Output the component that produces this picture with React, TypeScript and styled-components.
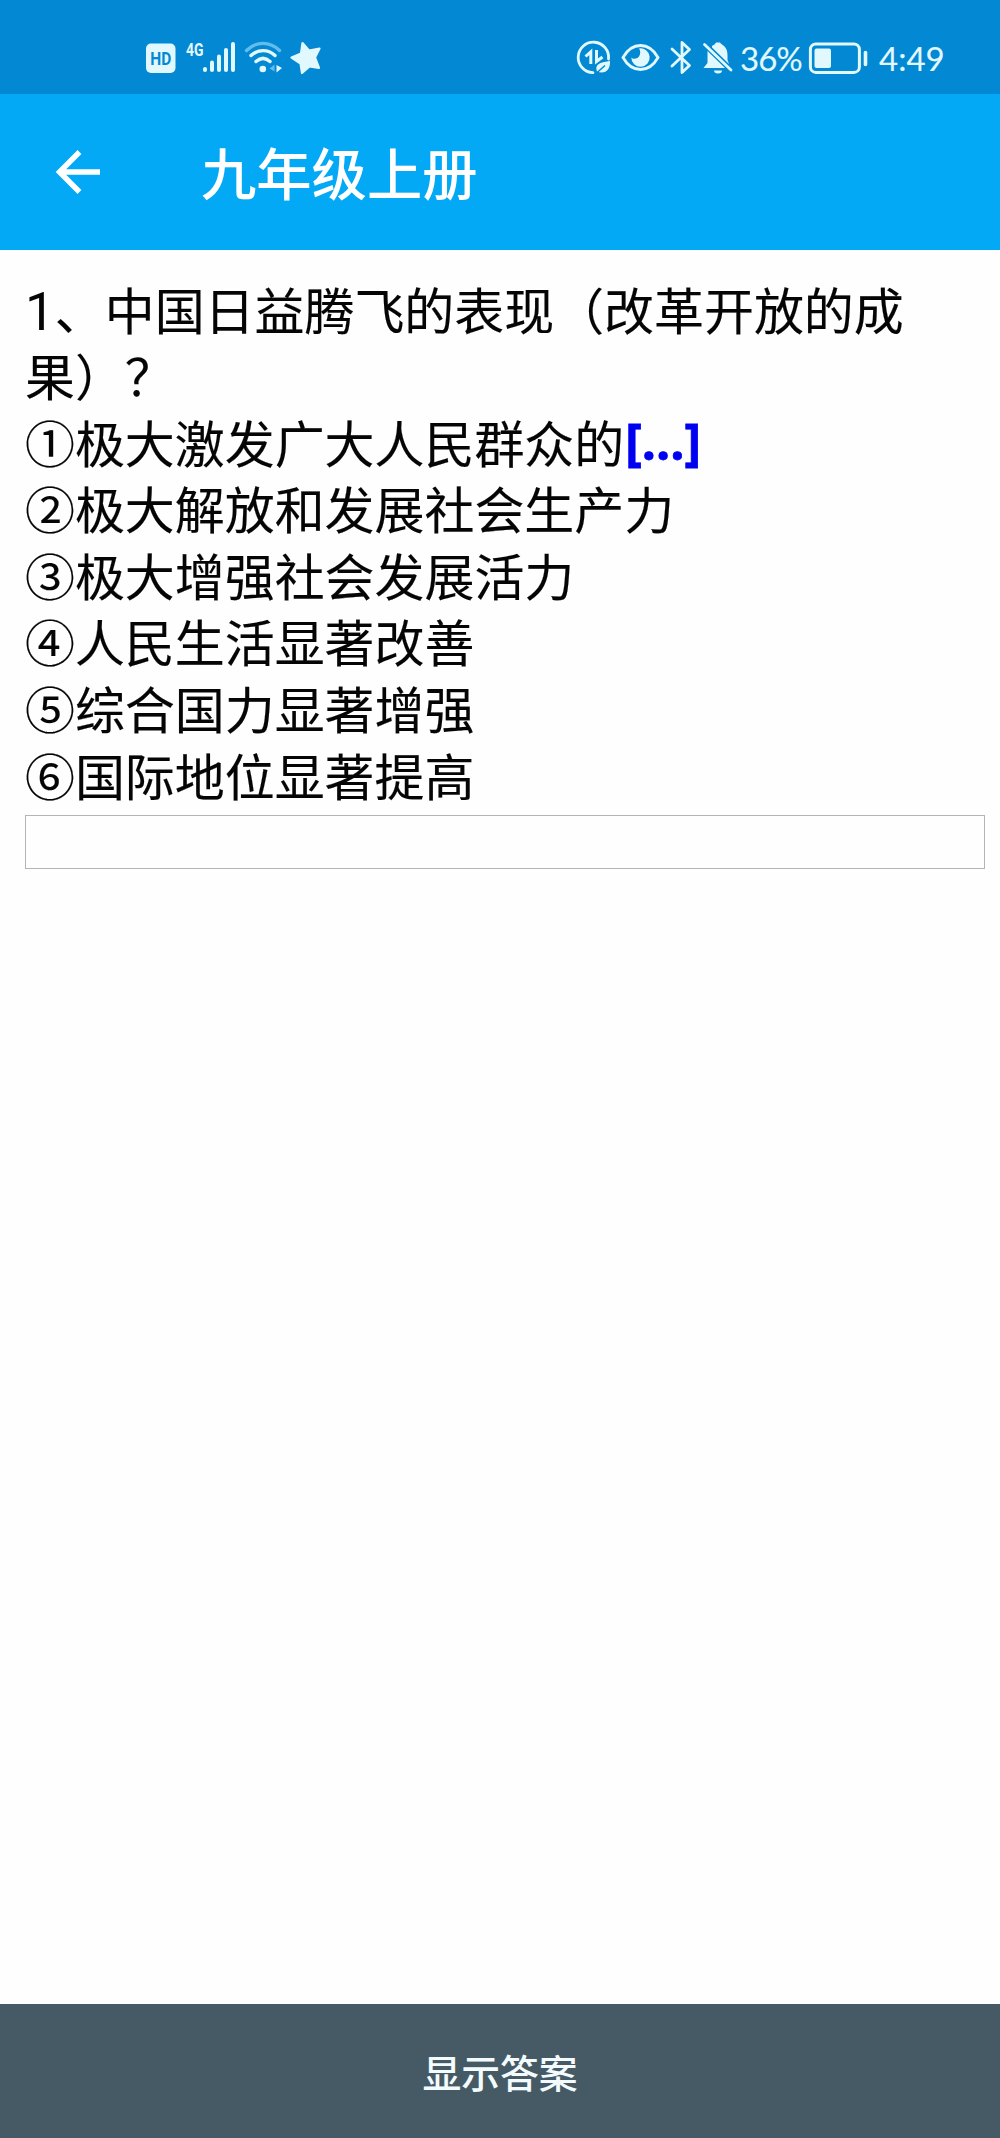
import React from 'react';
import styled, { createGlobalStyle } from 'styled-components';

const GlobalStyle = createGlobalStyle`
  body { margin: 0; background: #fefefe; }
  * { box-sizing: border-box; }
`;

const cjk = `"Noto Sans CJK SC", sans-serif`;
const ink = '#e2f8ff';

const Screen = styled.div`
  display: flex;
  flex-direction: column;
  width: 1000px;
  height: 2138px;
  background: #fefefe;
  font-family: ${cjk};
`;

const StatusBar = styled.div`
  display: flex;
  justify-content: space-between;
  height: 94px;
  padding: 38px 56px 0 146px;
  background: #0388d3;
  color: ${ink};
`;

const StatusGroup = styled.div`
  display: flex;
  align-items: flex-start;
  height: 40px;
`;

const Glyph = styled.svg<{ $gap?: number }>`
  display: block;
  flex: none;
  height: 40px;
  margin-left: ${(p) => p.$gap ?? 0}px;
  overflow: visible;
`;

const StatusText = styled.span<{ $width: number; $gap: number; $spacing?: number }>`
  flex: none;
  width: ${(p) => p.$width}px;
  margin-left: ${(p) => p.$gap}px;
  font: 400 33px/41px Lato, sans-serif;
  letter-spacing: ${(p) => p.$spacing ?? 0}px;
  white-space: nowrap;
  -webkit-text-stroke: 0.1px ${ink};
`;

const AppBar = styled.header`
  display: flex;
  align-items: center;
  height: 156px;
  padding-left: 55px;
  background: #03a9f4;
  color: #fff;
`;

const BackButton = styled.button`
  display: flex;
  align-items: center;
  width: 46px;
  height: 46px;
  padding: 0;
  border: 0;
  background: none;
  color: inherit;
`;

const Title = styled.h1`
  margin: 0 0 3px 100px;
  font: 500 55.3px/80px ${cjk};
`;

const Content = styled.main`
  flex: 1;
  padding: 24.5px 15px 0 25px;
`;

const Line = styled.p`
  margin: 0;
  font-size: 49.95px;
  line-height: 66.6px;
  color: #050505;
  -webkit-text-stroke: 0.15px #050505;
`;

const Numeral = styled.span`
  font: 400 53px/0 Roboto, sans-serif;
  -webkit-text-stroke: 0;
`;

const Cloze = styled.span`
  position: relative;
  top: -2.5px;
  margin-left: 1px;
  font: 700 50px/0 "Open Sans", sans-serif;
  color: #0000f0;
  -webkit-text-stroke: 0.8px #0000f0;
`;

const AnswerInput = styled.input`
  display: block;
  width: 960px;
  height: 54px;
  margin: 7.5px 0 0;
  padding: 0 8px;
  border: 1px solid #b4b4b4;
  background: #fefefe;
  font: 36px ${cjk};
`;

const ShowAnswer = styled.button`
  height: 134px;
  padding: 0 0 1px;
  border: 0;
  background: #455a64;
  color: #f4fbff;
  font: 500 38.8px/60px ${cjk};
`;

const LeftStatus = () => (
  <StatusGroup>
    <Glyph width="30" viewBox="0 0 30 40">
      <rect x="0" y="5.5" width="29.5" height="29.5" rx="5" fill={ink} />
      <text x="14.8" y="26.5" textAnchor="middle" textLength="21" lengthAdjust="spacingAndGlyphs"
        fontFamily="Roboto" fontWeight="700" fontSize="18" fill="#0388d3">HD</text>
    </Glyph>
    <Glyph width="50" viewBox="0 0 50 40" $gap={10} fill={ink}>
      <text x="0" y="17.5" textLength="17.5" lengthAdjust="spacingAndGlyphs"
        fontFamily="Roboto" fontWeight="700" fontSize="19">4G</text>
      <rect x="17" y="29" width="4" height="5" rx="2" />
      <rect x="24" y="22.5" width="4" height="11.5" rx="2" />
      <rect x="31" y="16.5" width="4" height="17.5" rx="2" />
      <rect x="38" y="10" width="4" height="24" rx="2" />
      <rect x="45" y="4" width="4" height="30" rx="2" />
    </Glyph>
    <Glyph width="37" viewBox="0 0 37 40" $gap={9} fill="none" stroke={ink} strokeWidth="3.4" strokeLinecap="round">
      <path d="M1.500 12.500C11 3 25 3 34.500 12.500" stroke="#62bdeb" />
      <path d="M6 17.500C13 11 23 11 30 17.500" />
      <path d="M11 23.500C15.500 19.500 20.500 19.500 25 23.500" />
      <circle cx="17.800" cy="31" r="3.300" fill={ink} stroke="none" />
      <path d="M29.500 26.500v7l-5-3z" fill="#62bdeb" stroke="none" />
      <path d="M31.500 27v7.500l5.500-4.500z" fill={ink} stroke="none" />
    </Glyph>
    <Glyph width="32" viewBox="0 0 32 40" $gap={8}>
      <path d="M12.500 5L19 12.500L29.500 10.500L25 19.500L29 30L19.500 28.500L12 35L10.500 25.500L1.500 19.500L11 15.500Z"
        fill={ink} stroke={ink} strokeWidth="2.200" strokeLinejoin="round" />
    </Glyph>
  </StatusGroup>
);

const RightStatus = () => (
  <StatusGroup>
    <Glyph width="34" viewBox="0 0 34 40" fill="none" stroke={ink} strokeWidth="2.800">
      <path d="M31.500 21A15.200 15.200 0 1 0 16 34.600" strokeLinecap="round" />
      <path d="M8.500 18.500L13.800 13.800V26" strokeWidth="3" />
      <path d="M19.500 12V23.500L25.500 19" strokeWidth="3" />
      <path d="M20 33.500C17 25.500 25 24 33 23C33.500 32 28 36.500 20 33.500Z" fill={ink} stroke="none" />
      <path d="M18.500 36L28 27.500" stroke="#0388d3" strokeWidth="1.500" />
    </Glyph>
    <Glyph width="39" viewBox="0 0 39 40" $gap={10}>
      <path d="M2 19.500C11 3.500 28 3.500 37 19.500C28 35.500 11 35.500 2 19.500Z" fill="none" stroke={ink} strokeWidth="2.800" />
      <path d="M18 10.500A9.200 9.200 0 1 1 10.300 19.500C12 21.500 16 21 18 18.500C19.800 16 19.500 12.500 18 10.500Z" fill={ink} />
    </Glyph>
    <Glyph width="22" viewBox="0 0 22 40" $gap={10} fill="none" stroke={ink} strokeWidth="2.800" strokeLinecap="round" strokeLinejoin="round">
      <path d="M2 11L19.500 27.500L12 34.500V4.500L19.500 11.500L2 28" />
    </Glyph>
    <Glyph width="30" viewBox="0 0 30 40" $gap={11}>
      <path d="M9 8C10.500 7 12 6.500 13 4.500H17C18.500 7 24.500 8 24.500 17V22L26 26L9 9.500Z" fill={ink} />
      <path d="M4.500 13L22 30H0.500L4.500 25Z" fill={ink} />
      <path d="M1.500 6.500L28 32" stroke={ink} strokeWidth="2.800" strokeLinecap="round" />
      <path d="M11 32.500h8a4 3 0 0 1-8 0Z" fill={ink} />
    </Glyph>
    <StatusText $width={61} $gap={7} $spacing={-1}>36%</StatusText>
    <Glyph width="60" viewBox="0 0 60 40" $gap={8}>
      <rect x="1.400" y="5.900" width="49" height="28.500" rx="5.500" fill="none" stroke={ink} strokeWidth="3" />
      <rect x="5.500" y="10.500" width="16.500" height="19.500" rx="2" fill={ink} />
      <path d="M56.500 14.500v12" stroke={ink} strokeWidth="3.600" strokeLinecap="round" />
    </Glyph>
    <StatusText $width={65} $gap={10}>4:49</StatusText>
  </StatusGroup>
);

const lines = [
  '②极大解放和发展社会生产力',
  '③极大增强社会发展活力',
  '④人民生活显著改善',
  '⑤综合国力显著增强',
  '⑥国际地位显著提高',
];

export default function App() {
  return (
    <Screen>
      <GlobalStyle />
      <StatusBar>
        <LeftStatus />
        <RightStatus />
      </StatusBar>
      <AppBar>
        <BackButton aria-label="返回">
          <Glyph width="46" viewBox="0 0 46 40" fill="none" stroke="#fff" strokeWidth="5.400">
            <path d="M45 20H5M24.500 0L4.500 20L24.500 40" />
          </Glyph>
        </BackButton>
        <Title>九年级上册</Title>
      </AppBar>
      <Content>
        <Line>
          <Numeral>1</Numeral>、中国日益腾飞的表现（改革开放的成
          <br />
          果）？
        </Line>
        <Line>
          ①极大激发广大人民群众的<Cloze>[...]</Cloze>
        </Line>
        {lines.map((text) => (
          <Line key={text}>{text}</Line>
        ))}
        <AnswerInput aria-label="答案" />
      </Content>
      <ShowAnswer>显示答案</ShowAnswer>
    </Screen>
  );
}
